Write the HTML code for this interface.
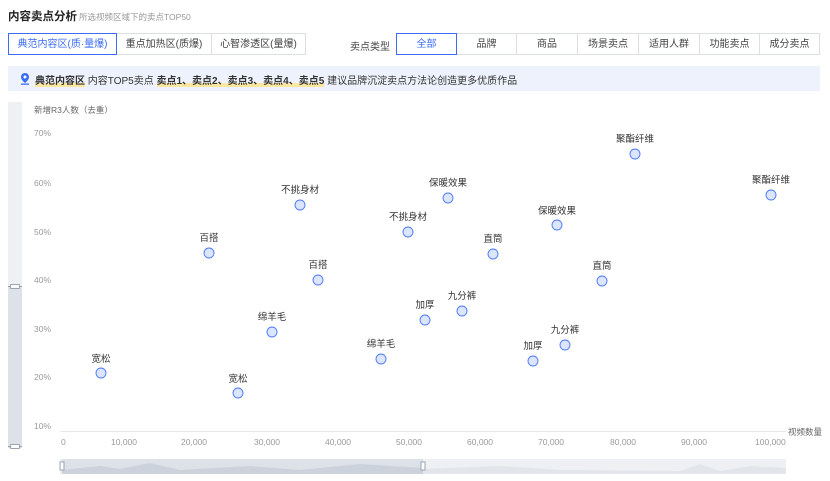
<!DOCTYPE html>
<html><head><meta charset="utf-8"><style>
*{margin:0;padding:0;box-sizing:border-box}
body{width:830px;height:481px;background:#fff;font-family:"Liberation Sans","Noto Sans CJK SC",sans-serif;position:relative;overflow:hidden;color:#333}
.a{position:absolute;white-space:nowrap}
.tab{position:absolute;top:33px;height:22px;border:1px solid #dcdfe6;font-size:10px;text-align:center;line-height:21px;color:#444}
.sel{border-color:#3b6cf6;color:#3b6cf6;z-index:2}
.hl{background:linear-gradient(transparent 65%,#fbe7a0 65%);font-weight:bold}
</style></head><body>
<div class="a" style="left:8px;top:8px;font-size:11.5px;font-weight:bold;color:#222">内容卖点分析</div>
<div class="a" style="left:79px;top:11px;font-size:8.5px;color:#999">所选视频区域下的卖点TOP50</div>

<div class="tab sel" style="left:8px;width:109px">典范内容区(质·量爆)</div>
<div class="tab" style="left:116px;width:96px">重点加热区(质爆)</div>
<div class="tab" style="left:211px;width:95px">心智渗透区(量爆)</div>

<div class="a" style="left:350px;top:38px;font-size:10px;color:#444">卖点类型</div>
<div class="tab sel" style="left:396px;width:61px">全部</div>
<div class="tab" style="left:456px;width:61px">品牌</div>
<div class="tab" style="left:516px;width:62px">商品</div>
<div class="tab" style="left:577px;width:62px">场景卖点</div>
<div class="tab" style="left:638px;width:62px">适用人群</div>
<div class="tab" style="left:699px;width:61px">功能卖点</div>
<div class="tab" style="left:759px;width:61px">成分卖点</div>

<div class="a" style="left:8px;top:66px;width:812px;height:25px;background:#eef2fc"></div>
<svg class="a" style="left:20px;top:73px" width="10" height="12" viewBox="0 0 10 12"><path d="M5 0a4 4 0 0 1 4 4c0 3-4 6-4 6S1 7 1 4a4 4 0 0 1 4-4z" fill="#3b6cf6"/><circle cx="5" cy="4" r="1.5" fill="#fff"/><rect x="1" y="10.5" width="8" height="1.3" fill="#3b6cf6"/></svg>
<div class="a" style="left:35px;top:72px;font-size:10px;color:#333"><span class="hl">典范内容区</span> 内容TOP5卖点 <span class="hl">卖点1、卖点2、卖点3、卖点4、卖点5</span> 建议品牌沉淀卖点方法论创造更多优质作品</div>

<div class="a" style="left:8px;top:102px;width:14px;height:346px;background:#eef0f4"></div>
<div class="a" style="left:8px;top:287px;width:14px;height:161px;background:#dde1e8"></div>
<div class="a" style="left:8px;top:286px;width:14px;height:1px;background:#9aa4b4"></div>
<div class="a" style="left:10px;top:284px;width:10px;height:5px;border:1px solid #9aa4b4;background:#fff;border-radius:1px"></div>
<div class="a" style="left:8px;top:446px;width:14px;height:1px;background:#9aa4b4"></div>
<div class="a" style="left:10px;top:444px;width:10px;height:5px;border:1px solid #9aa4b4;background:#fff;border-radius:1px"></div>

<div class="a" style="left:34px;top:104px;font-size:8.5px;color:#666">新增R3人数（去重）</div>
<div style="position:absolute;left:34px;top:0;font-size:8.5px;color:#999">
<div class="a" style="top:128px">70%</div><div class="a" style="top:178px">60%</div><div class="a" style="top:227px">50%</div><div class="a" style="top:275px">40%</div><div class="a" style="top:324px">30%</div><div class="a" style="top:372px">20%</div><div class="a" style="top:421px">10%</div>
</div>
<div class="a" style="left:60px;top:431px;width:726px;height:1px;background:#e6e8ec"></div>
<div style="position:absolute;left:0;top:437px;font-size:8.5px;color:#999">
<div class="a" style="left:61px">0</div><div class="a" style="left:111px">10,000</div><div class="a" style="left:181px">20,000</div><div class="a" style="left:254px">30,000</div><div class="a" style="left:325px">40,000</div><div class="a" style="left:396px">50,000</div><div class="a" style="left:467px">60,000</div><div class="a" style="left:538px">70,000</div><div class="a" style="left:610px">80,000</div><div class="a" style="left:681px">90,000</div><div class="a" style="left:755px">100,000</div>
</div>
<div class="a" style="left:788px;top:426px;font-size:8.5px;color:#666">视频数量</div>

<svg class="a" style="left:0;top:0" width="830" height="481">
<g fill="#dbe5fd" stroke="#4a78f5" stroke-width="0.9">
<circle cx="101" cy="373" r="5"/><circle cx="238" cy="393" r="5"/><circle cx="209" cy="253" r="5"/><circle cx="318" cy="280" r="5"/><circle cx="272" cy="332" r="5"/><circle cx="381" cy="359" r="5"/><circle cx="300" cy="205" r="5"/><circle cx="408" cy="232" r="5"/><circle cx="448" cy="198" r="5"/><circle cx="557" cy="225" r="5"/><circle cx="493" cy="254" r="5"/><circle cx="602" cy="281" r="5"/><circle cx="425" cy="320" r="5"/><circle cx="533" cy="361" r="5"/><circle cx="462" cy="311" r="5"/><circle cx="565" cy="345" r="5"/><circle cx="635" cy="154" r="5"/><circle cx="771" cy="195" r="5"/>
</g>
<g font-size="9.5" fill="#333" text-anchor="middle" font-family="Liberation Sans,Noto Sans CJK SC,sans-serif">
<text x="101" y="362">宽松</text><text x="238" y="382">宽松</text><text x="209" y="241">百搭</text><text x="318" y="268">百搭</text><text x="272" y="320">绵羊毛</text><text x="381" y="347">绵羊毛</text><text x="300" y="193">不挑身材</text><text x="408" y="220">不挑身材</text><text x="448" y="186">保暖效果</text><text x="557" y="214">保暖效果</text><text x="493" y="242">直筒</text><text x="602" y="269">直筒</text><text x="425" y="308">加厚</text><text x="533" y="349">加厚</text><text x="462" y="299">九分裤</text><text x="565" y="333">九分裤</text><text x="635" y="142">聚酯纤维</text><text x="771" y="183">聚酯纤维</text>
</g>
<rect x="60" y="459" width="726" height="15" fill="#eef0f4"/>
<rect x="62" y="459" width="361" height="15" fill="#dde1e8"/>
<path d="M62 474 L62 470 L100 466 L120 469 L150 463 L180 470 L250 466 L300 470 L360 464 L423 468 L423 474Z" fill="#ccd2dc"/>
<path d="M423 474 L423 469 L500 466 L560 470 L680 471 L700 464 L720 471 L750 466 L786 468 L786 474Z" fill="#e2e5ea"/>
<rect x="60" y="462" width="4" height="8" fill="#fff" stroke="#9aa4b4"/>
<rect x="421" y="462" width="4" height="8" fill="#fff" stroke="#9aa4b4"/>
</svg>
</body></html>
